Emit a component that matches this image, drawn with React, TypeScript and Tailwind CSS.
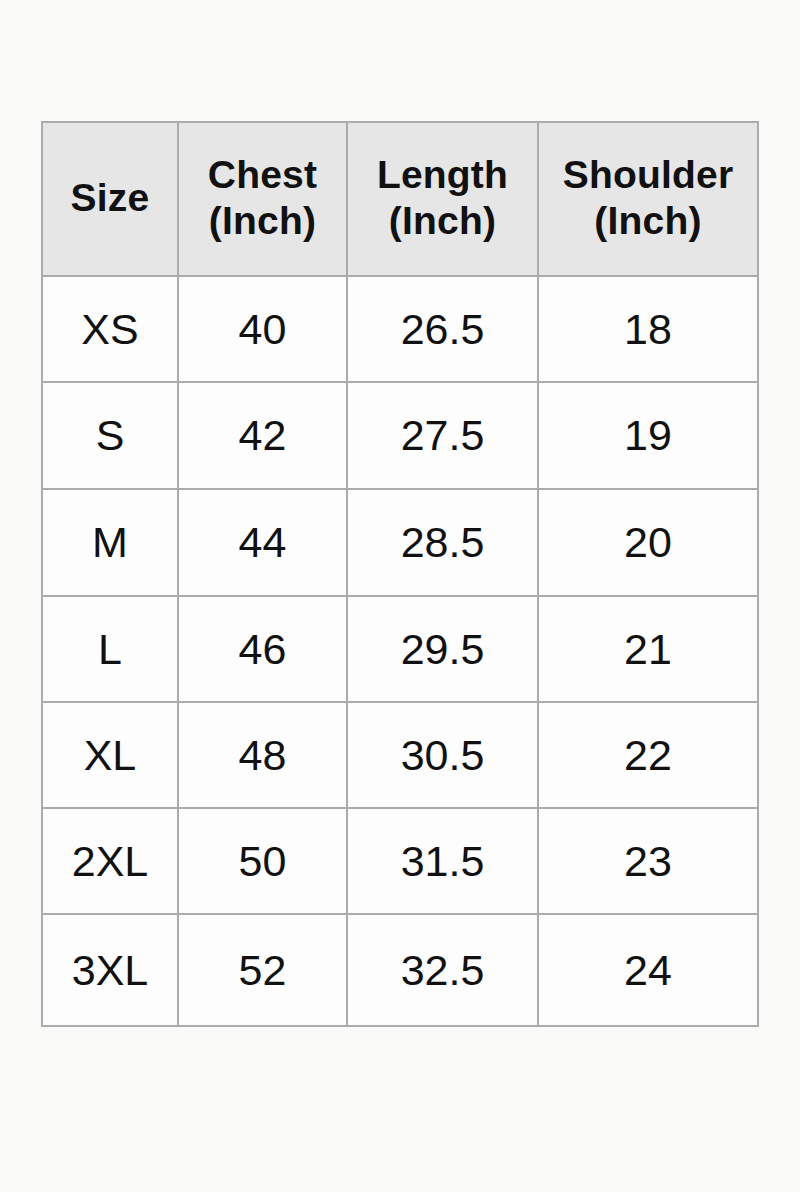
const headers = ["Size", "Chest\n(Inch)", "Length\n(Inch)", "Shoulder\n(Inch)"];

const rows = [
  ["XS", "40", "26.5", "18"],
  ["S", "42", "27.5", "19"],
  ["M", "44", "28.5", "20"],
  ["L", "46", "29.5", "21"],
  ["XL", "48", "30.5", "22"],
  ["2XL", "50", "31.5", "23"],
  ["3XL", "52", "32.5", "24"],
];

// row heights measured from the reference (border included)
const heights = ["h-[106px]", "h-[107px]", "h-[107px]", "h-[106px]", "h-[106px]", "h-[106px]", "h-[112px]"];

export default function App() {
  return (
    <div
      className="min-h-[1192px] w-[800px] bg-[#fafaf8] pt-[121px] text-[#111]"
      style={{ fontFamily: '"Liberation Sans", Arial, sans-serif' }}
    >
      <div className="mx-auto grid w-[718px] grid-cols-[136px_169px_191px_220px] border-t-2 border-l-2 border-[#ababab]">
        {headers.map((h) => (
          <div
            key={h}
            className="flex h-[154px] items-center justify-center whitespace-pre-line border-r-2 border-b-2 border-[#ababab] bg-[#e6e6e6] pb-[2px] text-center text-[39px] font-bold leading-[46px] tracking-[0.2px]"
          >
            {h}
          </div>
        ))}
        {rows.map((r, i) =>
          r.map((c, j) => (
            <div
              key={i + "-" + j}
              className={
                "flex items-center justify-center border-r-2 border-b-2 border-[#ababab] bg-[#fdfdfd] text-[43px] " +
                heights[i]
              }
            >
              {c}
            </div>
          ))
        )}
      </div>
    </div>
  );
}
